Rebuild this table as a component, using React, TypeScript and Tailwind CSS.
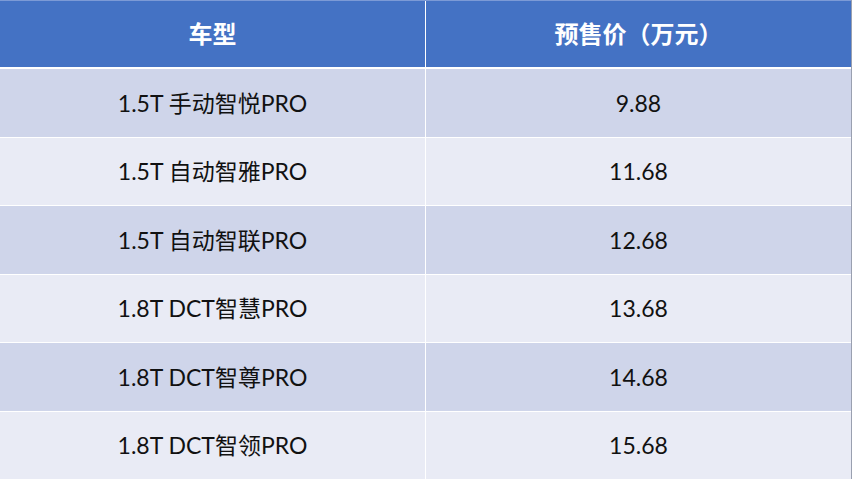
const rows = [
  { model: "1.5T 手动智悦PRO", price: "9.88" },
  { model: "1.5T 自动智雅PRO", price: "11.68" },
  { model: "1.5T 自动智联PRO", price: "12.68" },
  { model: "1.8T DCT智慧PRO", price: "13.68" },
  { model: "1.8T DCT智尊PRO", price: "14.68" },
  { model: "1.8T DCT智领PRO", price: "15.68" },
];

export default function App() {
  return (
    <div className="w-[852px] h-[479px] bg-white flex flex-col font-['Lato','Noto_Sans_CJK_SC',sans-serif] border-r border-[#9aa0b0]">
      {/* header */}
      <div className="h-[67px] mb-[2px] flex gap-px border-t border-[#7c9ad6]">
        <div className="w-[425px] bg-[#4472c4] flex items-center justify-center text-white text-[24px] font-bold">
          车型
        </div>
        <div className="flex-1 bg-[#4472c4] flex items-center justify-center text-white text-[24px] font-bold">
          预售价（万元）
        </div>
      </div>

      {/* body */}
      <div className="flex-1 flex flex-col gap-px">
        {rows.map((r, i) => (
          <div key={r.model} className="flex-1 flex gap-px">
            <div
              className={
                "w-[425px] flex items-center justify-center text-[23px] text-[#111] " +
                (i % 2 === 0 ? "bg-[#cfd5ea]" : "bg-[#e9ebf5]")
              }
            >
              {r.model}
            </div>
            <div
              className={
                "flex-1 flex items-center justify-center text-[23px] text-[#111] " +
                (i % 2 === 0 ? "bg-[#cfd5ea]" : "bg-[#e9ebf5]")
              }
            >
              {r.price}
            </div>
          </div>
        ))}
      </div>
    </div>
  );
}
